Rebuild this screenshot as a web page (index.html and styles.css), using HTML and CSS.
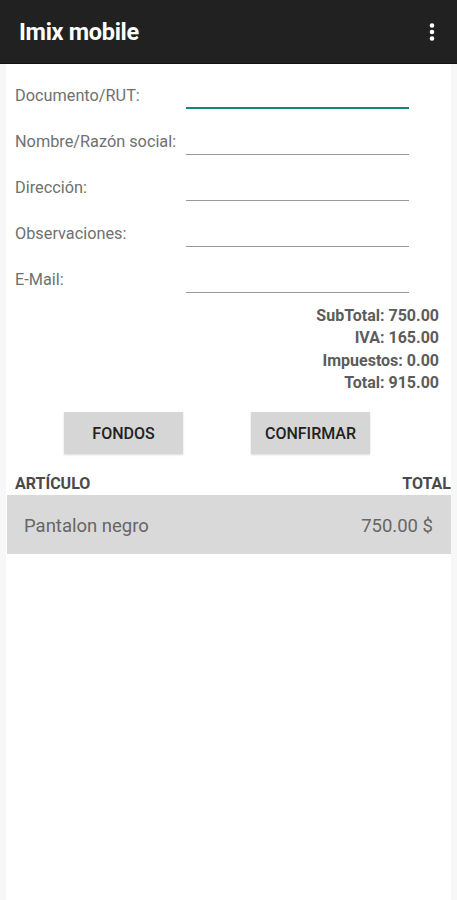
FILE: index.html
```html
<!DOCTYPE html>
<html lang="es">
<head>
<meta charset="utf-8">
<title>Imix mobile</title>
<link rel="stylesheet" href="styles.css">
</head>
<body>
<header class="appbar">
  <h1 class="appbar-title">Imix mobile</h1>
  <button class="overflow" aria-label="Más opciones">
    <svg width="24" height="24" viewBox="0 0 24 24"><circle cx="12" cy="5.5" r="2.3" fill="#fff"/><circle cx="12" cy="12" r="2.3" fill="#fff"/><circle cx="12" cy="18.5" r="2.3" fill="#fff"/></svg>
  </button>
</header>
<main class="content">
  <form class="form">
    <div class="row"><label class="label">Documento/RUT:</label><div class="field field-active"></div></div>
    <div class="row"><label class="label">Nombre/Razón social:</label><div class="field"></div></div>
    <div class="row"><label class="label">Dirección:</label><div class="field"></div></div>
    <div class="row"><label class="label">Observaciones:</label><div class="field"></div></div>
    <div class="row"><label class="label">E-Mail:</label><div class="field"></div></div>
  </form>
  <div class="totals">
    <div>SubTotal: 750.00</div>
    <div>IVA: 165.00</div>
    <div>Impuestos: 0.00</div>
    <div>Total: 915.00</div>
  </div>
  <div class="actions">
    <button class="btn">FONDOS</button>
    <button class="btn">CONFIRMAR</button>
  </div>
  <div class="list-head"><span>ARTÍCULO</span><span>TOTAL</span></div>
  <div class="item"><span>Pantalon negro</span><span>750.00 $</span></div>
</main>
</body>
</html>
```
FILE: styles.css
```css
* { box-sizing: border-box; }
html, body { margin: 0; padding: 0; }
body {
  width: 457px;
  height: 900px;
  background: #f7f7f7;
  font-family: Roboto, "Noto Sans", sans-serif;
  display: flex;
  flex-direction: column;
  overflow: hidden;
}
.appbar {
  height: 64px;
  background: #212121;
  display: flex;
  align-items: center;
  justify-content: space-between;
  padding: 0 13px 0 19px;
  border-bottom: 1px solid #111;
}
.appbar-title {
  margin: 0;
  color: #fff;
  font-size: 23.5px;
  font-weight: 700;
  letter-spacing: -0.3px;
}
.overflow {
  border: 0;
  background: none;
  padding: 0;
  width: 24px;
  height: 24px;
  display: flex;
}
.content {
  flex: 1;
  margin: 0 6px;
  background: #fff;
  padding-top: 8px;
}
.form { display: flex; flex-direction: column; }
.row {
  height: 46px;
  display: flex;
  align-items: flex-start;
}
.label {
  width: 180px;
  padding: 14px 0 0 9px;
  line-height: 20px;
  font-size: 16.3px;
  color: #707070;
  white-space: nowrap;
}
.field {
  width: 223px;
  height: 37px;
  border-bottom: 1px solid #9a9a9a;
}
.field-active {
  border-bottom: 2px solid #14877a;
}
.totals {
  padding: 3px 12px 0 0;
  text-align: right;
  font-size: 16px;
  line-height: 22.3px;
  font-weight: 700;
  color: #5c5c5c;
}
.actions {
  display: flex;
  gap: 68px;
  padding: 18px 0 0 58px;
}
.btn {
  width: 119px;
  height: 42px;
  border: 0;
  background: #d6d6d6;
  font-family: Roboto, sans-serif;
  font-size: 16px;
  font-weight: 500;
  color: #222;
  box-shadow: 0 1px 2px rgba(0,0,0,0.15);
}
.list-head {
  display: flex;
  justify-content: space-between;
  padding: 19px 0 0 9px;
  font-size: 16px;
  font-weight: 700;
  color: #4a4a4a;
  line-height: 22px;
}
.item {
  margin: 0 0 0 1px;
  height: 59px;
  background: #d9d9d9;
  display: flex;
  align-items: center;
  justify-content: space-between;
  padding: 2px 18px 0 17px;
  font-size: 18.5px;
  color: #666;
}
```
